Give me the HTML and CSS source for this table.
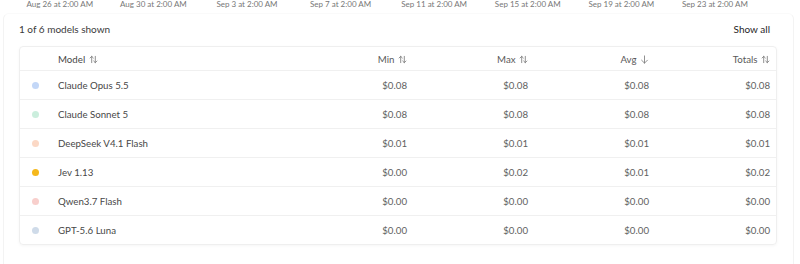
FILE: index.html
```html
<!DOCTYPE html>
<html>
<head>
<meta charset="utf-8">
<link rel="stylesheet" href="styles.css">
</head>
<body>
<div class="axis">
  <span>Aug 26 at 2:00 AM</span>
  <span>Aug 30 at 2:00 AM</span>
  <span>Sep 3 at 2:00 AM</span>
  <span>Sep 7 at 2:00 AM</span>
  <span>Sep 11 at 2:00 AM</span>
  <span>Sep 15 at 2:00 AM</span>
  <span>Sep 19 at 2:00 AM</span>
  <span>Sep 23 at 2:00 AM</span>
</div>
<div class="panel">
  <div class="bar">
    <span class="count">1 of 6 models shown</span>
    <span class="showall">Show all</span>
  </div>
  <div class="card">
    <table>
      <colgroup>
        <col class="c-dot"><col><col class="c-num"><col class="c-num"><col class="c-num"><col class="c-num">
      </colgroup>
      <thead>
        <tr>
          <th></th>
          <th class="left">Model <svg class="sort" viewBox="0 0 10 10"><path d="M3 8.5V1.5M1.2 3.3L3 1.5L4.8 3.3M7 1.5V8.5M5.2 6.7L7 8.5L8.8 6.7"/></svg></th>
          <th>Min <svg class="sort" viewBox="0 0 10 10"><path d="M3 8.5V1.5M1.2 3.3L3 1.5L4.8 3.3M7 1.5V8.5M5.2 6.7L7 8.5L8.8 6.7"/></svg></th>
          <th>Max <svg class="sort" viewBox="0 0 10 10"><path d="M3 8.5V1.5M1.2 3.3L3 1.5L4.8 3.3M7 1.5V8.5M5.2 6.7L7 8.5L8.8 6.7"/></svg></th>
          <th>Avg <svg class="sort" viewBox="0 0 10 10"><path d="M5 1V9M1.8 5.8L5 9L8.2 5.8"/></svg></th>
          <th>Totals <svg class="sort" viewBox="0 0 10 10"><path d="M3 8.5V1.5M1.2 3.3L3 1.5L4.8 3.3M7 1.5V8.5M5.2 6.7L7 8.5L8.8 6.7"/></svg></th>
        </tr>
      </thead>
      <tbody>
        <tr><td><span class="dot d1"></span></td><td class="left">Claude Opus 5.5</td><td>$0.08</td><td>$0.08</td><td>$0.08</td><td>$0.08</td></tr>
        <tr><td><span class="dot d2"></span></td><td class="left">Claude Sonnet 5</td><td>$0.08</td><td>$0.08</td><td>$0.08</td><td>$0.08</td></tr>
        <tr><td><span class="dot d3"></span></td><td class="left">DeepSeek V4.1 Flash</td><td>$0.01</td><td>$0.01</td><td>$0.01</td><td>$0.01</td></tr>
        <tr><td><span class="dot d4"></span></td><td class="left">Jev 1.13</td><td>$0.00</td><td>$0.02</td><td>$0.01</td><td>$0.02</td></tr>
        <tr><td><span class="dot d5"></span></td><td class="left">Qwen3.7 Flash</td><td>$0.00</td><td>$0.00</td><td>$0.00</td><td>$0.00</td></tr>
        <tr><td><span class="dot d6"></span></td><td class="left">GPT-5.6 Luna</td><td>$0.00</td><td>$0.00</td><td>$0.00</td><td>$0.00</td></tr>
      </tbody>
    </table>
  </div>
</div>
</body>
</html>
```
FILE: styles.css
```css
html, body {
  margin: 0;
  padding: 0;
  background: #ffffff;
  font-family: "Lato", "Noto Sans", sans-serif;
  color: #333;
  overflow: hidden;
}

.axis {
  display: flex;
  padding-left: 13px;
  margin-top: -2px;
  height: 12px;
  font-size: 8px;
  line-height: 12px;
  color: #777;
}
.axis span {
  width: 93.6px;
  flex: none;
  text-align: center;
  white-space: nowrap;
}

.panel {
  margin: 3px 6px 0 3px;
  border: 1px solid #f3f3f3;
  border-top-color: #fafafa;
  border-bottom: none;
  border-radius: 6px 6px 0 0;
  padding: 0 16px 0 15px;
  height: 260px;
}

.bar {
  display: flex;
  justify-content: space-between;
  align-items: center;
  height: 28px;
  font-size: 10px;
  padding-top: 1px;
}
.count { color: #3a3a3a; }
.showall { color: #1f1f1f; padding-right: 7px; }

.card {
  margin-top: 3px;
  border: 1px solid #efefef;
  border-radius: 4px;
  box-shadow: 0 1px 3px rgba(0,0,0,0.04);
  overflow: hidden;
}

table {
  width: 100%;
  border-collapse: collapse;
  table-layout: fixed;
  font-size: 9.7px;
}
col.c-dot { width: 28px; }
col.c-num { width: 121px; }

th {
  height: 23px;
  font-weight: 400;
  color: #5a5a5a;
  text-align: right;
  padding: 0 6px 0 0;
  border-bottom: 1px solid #f0f0f0;
  white-space: nowrap;
}
td {
  height: 28px;
  text-align: right;
  padding: 0 6px 0 0;
  color: #606060;
  border-bottom: 1px solid #f0f0f0;
  white-space: nowrap;
}
tbody tr:last-child td { border-bottom: none; }
th.left, td.left {
  text-align: left;
  padding-left: 10px;
  color: #474747;
}
td:first-child { padding: 0 0 0 12px; text-align: left; }

.sort {
  width: 9px;
  height: 9px;
  vertical-align: -1px;
  margin-left: 1px;
  fill: none;
  stroke: #777;
  stroke-width: 0.9;
  stroke-linecap: round;
  stroke-linejoin: round;
}

.dot {
  display: block;
  width: 7px;
  height: 7px;
  border-radius: 50%;
}
.d1 { background: #c3d7f7; }
.d2 { background: #cbeedd; }
.d3 { background: #fbd8c5; }
.d4 { background: #f5b81c; }
.d5 { background: #f8cfcc; }
.d6 { background: #cfdbe9; }
```
